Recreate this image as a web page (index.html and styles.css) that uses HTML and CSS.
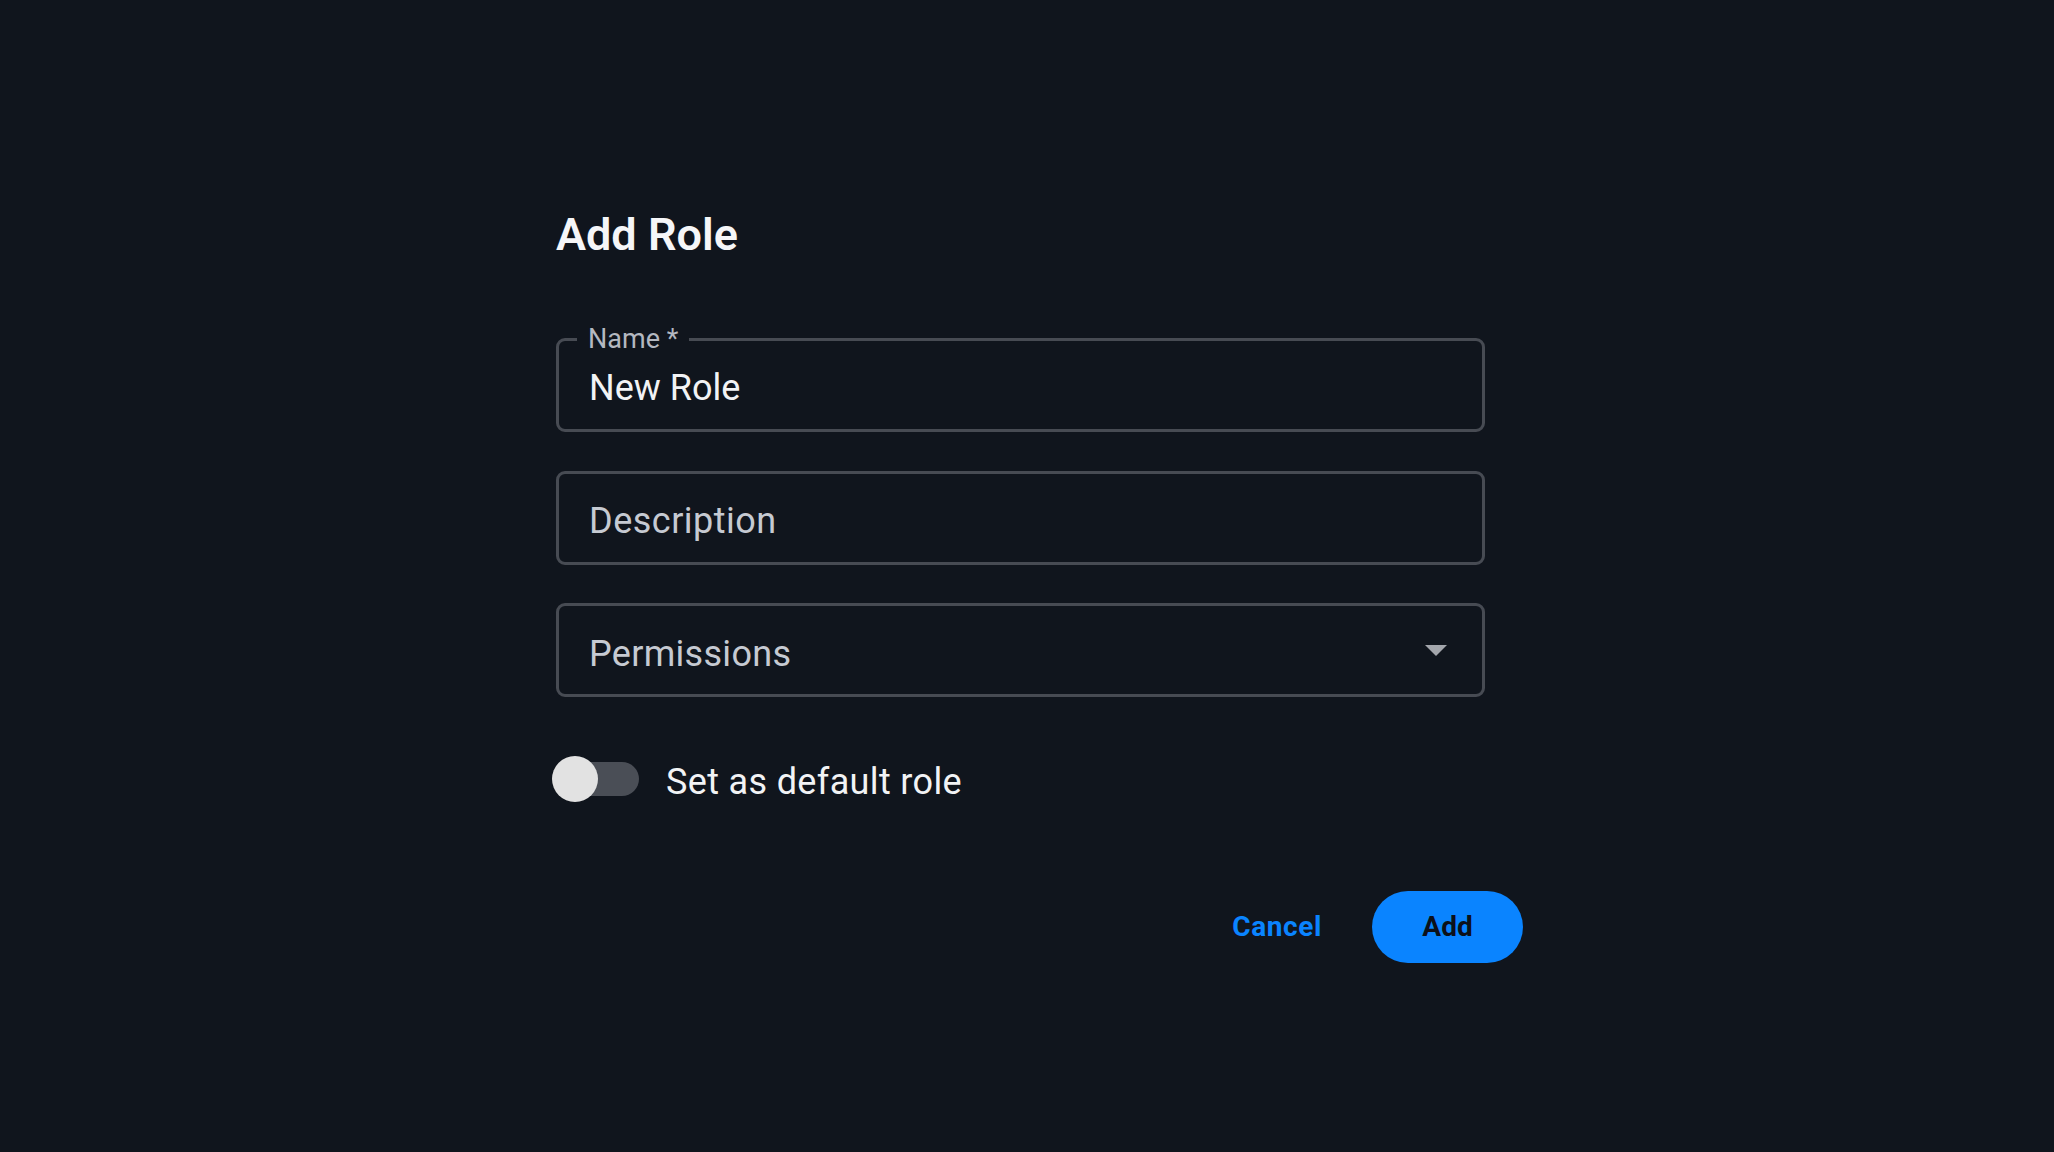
FILE: index.html
```html
<!DOCTYPE html>
<html lang="en">
<head>
<meta charset="utf-8">
<title>Add Role</title>
<link rel="stylesheet" href="styles.css">
</head>
<body>
<div class="dialog">
  <h1 class="title">Add Role</h1>
  <div class="fields">
    <div class="field">
      <span class="label">Name *</span>
      <span class="value">New Role</span>
    </div>
    <div class="field">
      <span class="placeholder">Description</span>
    </div>
    <div class="field select">
      <span class="placeholder">Permissions</span>
      <svg class="arrow" width="22" height="11" viewBox="0 0 22 11"><path d="M0 0 L22 0 L11 11 Z" fill="#a3a6ac"/></svg>
    </div>
  </div>
  <div class="toggle-row">
    <div class="switch"><span class="track"></span><span class="thumb"></span></div>
    <span class="toggle-label">Set as default role</span>
  </div>
  <div class="actions">
    <button class="btn cancel">Cancel</button>
    <button class="btn add">Add</button>
  </div>
</div>
</body>
</html>
```
FILE: styles.css
```css
html, body {
  margin: 0;
  padding: 0;
  background: #10151d;
  height: 1152px;
  overflow: hidden;
  font-family: Roboto, "Liberation Sans", sans-serif;
}
.dialog {
  width: 967px;
  margin-left: 556px;
  padding-top: 208px;
}
.title {
  margin: 0;
  font-size: 45px;
  line-height: 54px;
  font-weight: 600;
  color: #f5f6f8;
  padding-left: 0;
}
.fields {
  margin-top: 76px;
  width: 929px;
  display: flex;
  flex-direction: column;
  gap: 38.5px;
}
.field {
  position: relative;
  box-sizing: border-box;
  height: 94px;
  border: 3px solid #474b53;
  border-radius: 9px;
  padding: 29px 30px 23px 30px;
  font-size: 36px;
  line-height: 36px;
}
.label {
  position: absolute;
  left: 18px;
  top: -15px;
  padding: 0 11px;
  background: #10151d;
  font-size: 27px;
  line-height: 26px;
  color: #b4b8c0;
}
.value {
  color: #f2f3f5;
}
.placeholder {
  color: #c6cad2;
  letter-spacing: 0.5px;
}
.select {
  display: flex;
  align-items: center;
  justify-content: space-between;
  padding: 0 35px 0 30px;
}
.select .placeholder {
  padding-top: 7px;
  letter-spacing: 0.3px;
}
.arrow {
  display: block;
}
.toggle-row {
  margin-top: 59px;
  margin-left: -4px;
  display: flex;
  align-items: center;
  gap: 27px;
}
.switch {
  position: relative;
  width: 87px;
  height: 46px;
  display: flex;
  align-items: center;
}
.track {
  display: block;
  margin-left: 4px;
  width: 83px;
  height: 34px;
  border-radius: 17px;
  background: #4a4e56;
}
.thumb {
  position: absolute;
  left: 0;
  top: 0;
  width: 46px;
  height: 46px;
  border-radius: 50%;
  background: #e2e2e2;
}
.toggle-label {
  font-size: 36px;
  line-height: 36px;
  letter-spacing: 0.35px;
  color: #f2f3f5;
  padding-top: 6px;
}
.actions {
  margin-top: 89px;
  display: flex;
  justify-content: flex-end;
  align-items: center;
  gap: 25px;
}
.btn {
  font-family: Roboto, "Liberation Sans", sans-serif;
  font-size: 28px;
  line-height: 28px;
  font-weight: 700;
  border: none;
  height: 72px;
  border-radius: 36px;
  cursor: pointer;
}
.cancel {
  background: transparent;
  color: #0a84ff;
  padding: 0 25px;
  letter-spacing: 0.6px;
}
.add {
  background: #0a84ff;
  color: #0c111a;
  width: 151px;
  padding: 0;
}
```
